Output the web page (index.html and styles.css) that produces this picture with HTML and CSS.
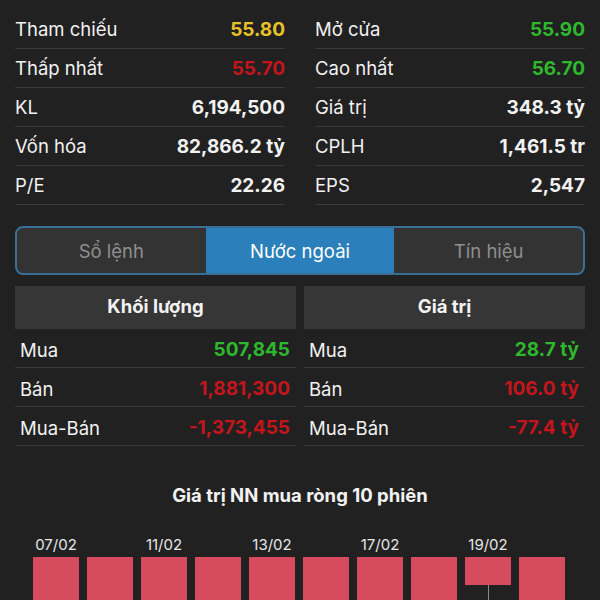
FILE: index.html
```html
<!DOCTYPE html>
<html lang="vi">
<head>
  <meta charset="UTF-8">
  <meta name="viewport" content="width=device-width, initial-scale=1.0">
  <title>Thông tin cổ phiếu</title>
  <link rel="stylesheet" href="styles.css">
</head>
<body>
  <div class="page">
    <div class="stats">
      <div class="stat-col">
        <div class="row"><span>Tham chiếu</span><b class="ref">55.80</b></div>
        <div class="row"><span>Thấp nhất</span><b class="down">55.70</b></div>
        <div class="row"><span>KL</span><b>6,194,500</b></div>
        <div class="row"><span>Vốn hóa</span><b>82,866.2 tỷ</b></div>
        <div class="row"><span>P/E</span><b>22.26</b></div>
      </div>
      <div class="stat-col">
        <div class="row"><span>Mở cửa</span><b class="up">55.90</b></div>
        <div class="row"><span>Cao nhất</span><b class="up">56.70</b></div>
        <div class="row"><span>Giá trị</span><b>348.3 tỷ</b></div>
        <div class="row"><span>CPLH</span><b>1,461.5 tr</b></div>
        <div class="row"><span>EPS</span><b>2,547</b></div>
      </div>
    </div>

    <div class="tabs">
      <div class="tab">Sổ lệnh</div>
      <div class="tab active">Nước ngoài</div>
      <div class="tab">Tín hiệu</div>
    </div>

    <div class="foreign">
      <div class="foreign-col">
        <div class="foreign-head">Khối lượng</div>
        <div class="row"><span>Mua</span><b class="up">507,845</b></div>
        <div class="row"><span>Bán</span><b class="down">1,881,300</b></div>
        <div class="row"><span>Mua-Bán</span><b class="down">-1,373,455</b></div>
      </div>
      <div class="foreign-col">
        <div class="foreign-head">Giá trị</div>
        <div class="row"><span>Mua</span><b class="up">28.7 tỷ</b></div>
        <div class="row"><span>Bán</span><b class="down">106.0 tỷ</b></div>
        <div class="row"><span>Mua-Bán</span><b class="down">-77.4 tỷ</b></div>
      </div>
    </div>

    <h2 class="chart-title">Giá trị NN mua ròng 10 phiên</h2>

    <div class="chart">
      <div class="day"><span class="date">07/02</span><div class="bar"></div></div>
      <div class="day"><span class="date"></span><div class="bar"></div></div>
      <div class="day"><span class="date">11/02</span><div class="bar"></div></div>
      <div class="day"><span class="date"></span><div class="bar"></div></div>
      <div class="day"><span class="date">13/02</span><div class="bar"></div></div>
      <div class="day"><span class="date"></span><div class="bar"></div></div>
      <div class="day"><span class="date">17/02</span><div class="bar"></div></div>
      <div class="day"><span class="date"></span><div class="bar"></div></div>
      <div class="day"><span class="date">19/02</span><div class="bar short"></div><div class="wick"></div></div>
      <div class="day"><span class="date"></span><div class="bar"></div></div>
    </div>
  </div>
</body>
</html>
```

FILE: styles.css
```css
body {
  margin: 0;
  background-color: #212121;
  color: #f2f2f2;
  font-family: Inter, "Noto Sans", sans-serif;
  font-size: 18.5px;
  overflow: hidden;
}

.page {
  padding: 10px 15px 0;
}

.stats {
  display: grid;
  grid-template-columns: 1fr 1fr;
  column-gap: 30px;
}

.row {
  display: flex;
  justify-content: space-between;
  align-items: center;
  height: 38px;
  border-bottom: 1px solid #3a3a3a;
}

.row b {
  font-weight: 700;
  font-size: 19px;
}

.ref {
  color: #e8c02a;
}

.up {
  color: #2eb82e;
}

.down {
  color: #c4151c;
}

.tabs {
  display: flex;
  margin-top: 21px;
  height: 45px;
  border: 2px solid #3a6f93;
  border-radius: 8px;
  overflow: hidden;
  background-color: #333333;
}

.tab {
  flex: 1;
  display: flex;
  align-items: center;
  justify-content: center;
  color: #8f8f8f;
}

.tab.active {
  background-color: #2b7fba;
  color: #ffffff;
}

.foreign {
  display: grid;
  grid-template-columns: 1fr 1fr;
  column-gap: 8px;
  margin-top: 11px;
}

.foreign-head {
  height: 43px;
  padding-bottom: 4px;
  box-sizing: border-box;
  display: flex;
  align-items: center;
  justify-content: center;
  background-color: #363636;
  font-weight: 700;
}

.foreign .row {
  height: 39px;
  padding: 3px 6px 0 5px;
  box-sizing: border-box;
}

.chart-title {
  margin: 38px 0 0;
  text-align: center;
  font-size: 18.5px;
  font-weight: 700;
}

.chart {
  display: grid;
  grid-template-columns: repeat(10, 46px);
  column-gap: 8px;
  margin: 29px 0 0 18px;
}

.day {
  display: flex;
  flex-direction: column;
  align-items: center;
}

.date {
  height: 22px;
  font-size: 15px;
  color: #e6e6e6;
}

.bar {
  width: 46px;
  height: 60px;
  background-color: #d64b5d;
}

.bar.short {
  height: 28px;
}

.wick {
  width: 1px;
  height: 30px;
  background-color: #8a8a8a;
}
```
